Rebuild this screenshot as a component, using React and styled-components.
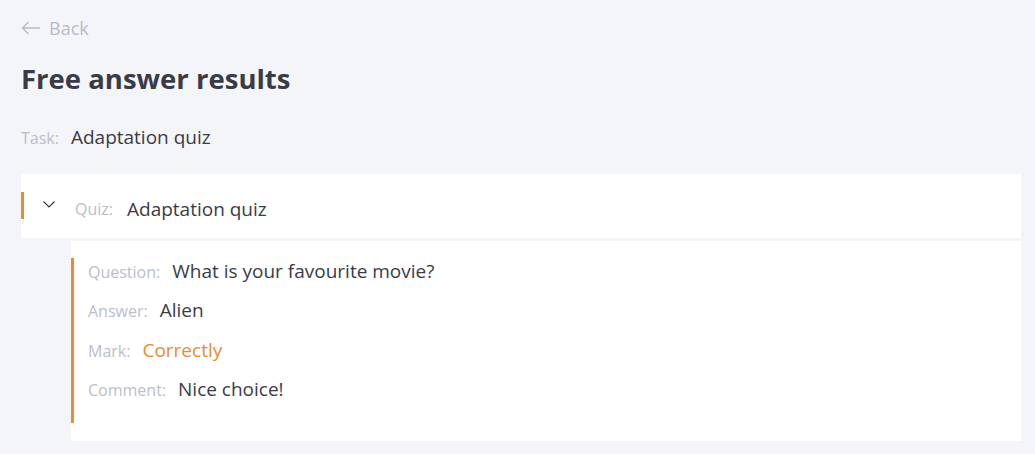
import styled, { createGlobalStyle } from "styled-components";

const GlobalStyle = createGlobalStyle`
    body {
        margin: 0;
        background: #f4f5f9;
        font-family: "Open Sans", "Noto Sans", sans-serif;
        color: #3b3b47;
    }
`;

const results = [
    { label: "Question:", value: "What is your favourite movie?" },
    { label: "Answer:", value: "Alien" },
    { label: "Mark:", value: "Correctly", accent: true },
    { label: "Comment:", value: "Nice choice!" },
];

const App = () => {
    return (
        <>
            <GlobalStyle />
            <Page>
                <BackLink>
                    <svg width="20" height="14" viewBox="0 0 20 14" fill="none" stroke="currentColor" strokeWidth="1.4">
                        <path d="M19 7H1.5M7.5 1L1.5 7l6 6" />
                    </svg>
                    Back
                </BackLink>

                <Title>Free answer results</Title>

                <TaskLine>
                    <Label>Task:</Label>
                    <Value>Adaptation quiz</Value>
                </TaskLine>

                <QuizHeader>
                    <Chevron>
                        <svg width="12" height="7" viewBox="0 0 12 7" fill="none" stroke="#3b3b47" strokeWidth="1.2">
                            <path d="M0.5 0.5L6 6l5.5-5.5" />
                        </svg>
                    </Chevron>
                    <Label>Quiz:</Label>
                    <Value>Adaptation quiz</Value>
                </QuizHeader>

                <ResultCard>
                    <ResultList>
                        {results.map((row) => (
                            <ResultRow key={row.label}>
                                <Label>{row.label}</Label>
                                <Value accent={row.accent}>{row.value}</Value>
                            </ResultRow>
                        ))}
                    </ResultList>
                </ResultCard>
            </Page>
        </>
    );
};

const Page = styled.div`
    padding: 15px 14px 12px 21px;
    display: flex;
    flex-direction: column;
`;

const BackLink = styled.a`
    display: flex;
    align-items: center;
    gap: 8px;
    color: #b9bac9;
    font-size: 18px;
    line-height: 26px;
    cursor: pointer;
`;

const Title = styled.h1`
    margin: 20px 0 0 0;
    font-size: 27.5px;
    line-height: 36px;
    font-weight: 700;
    color: #3b3b47;
`;

const TaskLine = styled.div`
    display: flex;
    align-items: baseline;
    gap: 12px;
    margin-top: 27px;
    height: 24px;
`;

const Label = styled.span`
    font-size: 16px;
    color: #bcbdca;
`;

const Value = styled.span`
    font-size: 19px;
    color: ${({ accent }) => (accent ? "#ec8a2f" : "#3b3b47")};
`;

const QuizHeader = styled.div`
    margin-top: 26px;
    height: 64px;
    background: #fff;
    display: flex;
    align-items: center;
    gap: 14px;
    padding: 6px 0 0 22px;
    position: relative;
    box-sizing: border-box;

    &::before {
        content: "";
        position: absolute;
        left: 0;
        top: 18px;
        width: 3px;
        height: 27px;
        background: #ec8a2f;
    }
`;

const Chevron = styled.span`
    display: flex;
    width: 18px;
    transform: translateY(-5px);
`;

const ResultCard = styled.div`
    margin: 3px 0 0 50px;
    background: #fff;
    padding: 17px 0 18px;
`;

const ResultList = styled.div`
    border-left: 3px solid #ec8a2f;
    padding: 0 0 23px 14px;
    display: flex;
    flex-direction: column;
    gap: 15.3px;
`;

const ResultRow = styled.div`
    display: flex;
    align-items: baseline;
    gap: 12px;
    height: 24px;
`;

export default App;
